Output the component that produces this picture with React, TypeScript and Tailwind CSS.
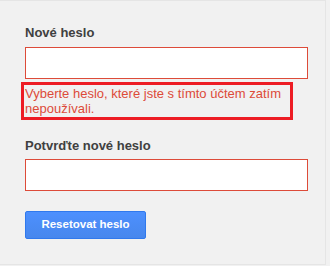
export default function App() {
  return (
    <div className="w-[330px] h-[266px] bg-[#f1f1f1] font-['Liberation_Sans',Arial,sans-serif]">
      <div className="w-[326px] h-[265px] border-t border-r border-b border-[#e5e5e5] pl-[25px] pt-[24px]">
        {/* New password */}
        <label className="block text-[13px] leading-[16px] font-bold text-[#404040]">Nové heslo</label>
        <input
          type="password"
          className="block mt-[6px] w-[283px] h-[32px] bg-white border border-[#dd4b39] outline-none"
        />
        <div className="mt-[7px] w-[264px] text-[13px] leading-[15px] text-[#dd4b39] outline-[3px] outline-solid outline-[#ed1c24] outline-offset-[1px]">
          Vyberte heslo, které jste s tímto účtem zatím nepoužívali.
        </div>

        {/* Confirm */}
        <label className="block mt-[22px] text-[13px] leading-[16px] font-bold text-[#404040]">Potvrďte nové heslo</label>
        <input
          type="password"
          className="block mt-[5px] w-[283px] h-[32px] bg-white border border-[#dd4b39] outline-none"
        />

        <button className="mt-[20px] w-[121px] h-[28px] rounded-[2px] border border-[#3079ed] bg-gradient-to-b from-[#4d90fe] to-[#4787ed] text-white text-[11.5px] font-bold">
          Resetovat heslo
        </button>
      </div>
    </div>
  );
}
